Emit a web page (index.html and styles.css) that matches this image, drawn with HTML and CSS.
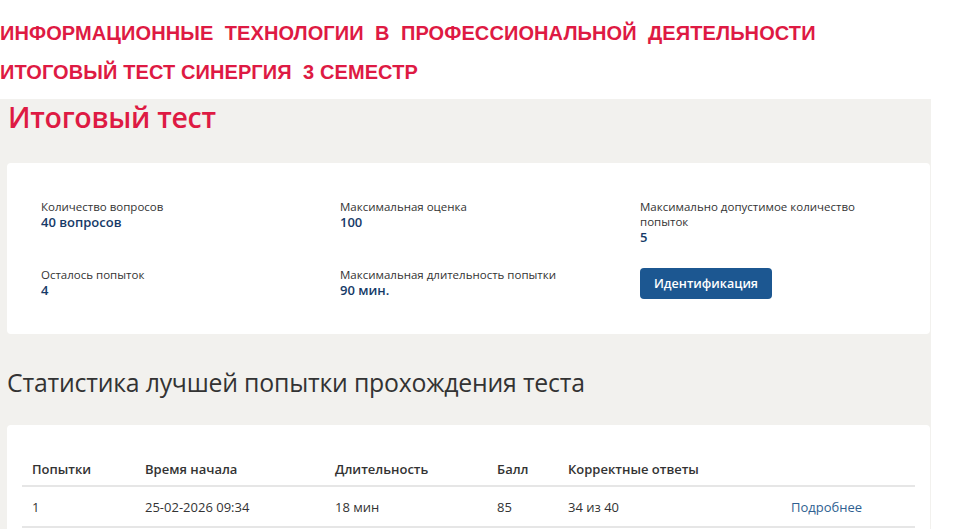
FILE: index.html
```html
<!DOCTYPE html>
<html lang="ru">
<head>
<meta charset="utf-8">
<link rel="stylesheet" href="styles.css">
</head>
<body>
<header class="banner">
  <div class="banner-line">ИНФОРМАЦИОННЫЕ&nbsp; ТЕХНОЛОГИИ&nbsp; В&nbsp; ПРОФЕССИОНАЛЬНОЙ&nbsp; ДЕЯТЕЛЬНОСТИ</div>
  <div class="banner-line">ИТОГОВЫЙ ТЕСТ СИНЕРГИЯ&nbsp; 3 СЕМЕСТР</div>
</header>
<main class="panel">
  <h1 class="title">Итоговый тест</h1>
  <section class="card info">
    <div class="info-grid">
      <div class="item"><div class="label">Количество вопросов</div><div class="value">40 вопросов</div></div>
      <div class="item"><div class="label">Максимальная оценка</div><div class="value">100</div></div>
      <div class="item"><div class="label">Максимально допустимое количество<br>попыток</div><div class="value">5</div></div>
      <div class="item"><div class="label">Осталось попыток</div><div class="value">4</div></div>
      <div class="item"><div class="label">Максимальная длительность попытки</div><div class="value">90 мин.</div></div>
      <div class="item"><button class="btn">Идентификация</button></div>
    </div>
  </section>
  <h2 class="subtitle">Статистика лучшей попытки прохождения теста</h2>
  <section class="card stats">
    <table class="tbl">
      <thead>
        <tr><th class="c1">Попытки</th><th class="c2">Время начала</th><th class="c3">Длительность</th><th class="c4">Балл</th><th class="c5">Корректные ответы</th><th class="c6"></th></tr>
      </thead>
      <tbody>
        <tr><td>1</td><td>25-02-2026 09:34</td><td>18 мин</td><td>85</td><td>34 из 40</td><td><a class="more" href="#">Подробнее</a></td></tr>
      </tbody>
    </table>
  </section>
</main>
</body>
</html>
```
FILE: styles.css
```css
html, body {
  margin: 0;
  padding: 0;
  background: #ffffff;
}
body {
  width: 965px;
  height: 529px;
  overflow: hidden;
  font-family: "Open Sans", "Noto Sans", sans-serif;
}
.banner {
  padding: 14px 0 0 0;
  height: 99px;
  box-sizing: border-box;
}
.banner-line {
  font-family: "Liberation Sans", Arial, sans-serif;
  font-weight: bold;
  font-size: 20px;
  color: #de1a43;
  line-height: 39px;
  letter-spacing: 0.1px;
  white-space: nowrap;
}
.panel {
  width: 931px;
  height: 430px;
  background: #f2f1ee;
  padding: 0 1px 0 7px;
  box-sizing: border-box;
}
.title {
  margin: 0;
  padding: 0 0 0 1px;
  font-family: "Open Sans", sans-serif;
  font-weight: 600;
  font-size: 28.5px;
  line-height: 36px;
  color: #de1a43;
  letter-spacing: -0.3px;
}
.card {
  background: #ffffff;
  border-radius: 4px;
}
.info {
  margin-top: 28px;
  height: 171px;
  box-sizing: border-box;
  padding: 36px 0 0 34px;
}
.info-grid {
  display: grid;
  grid-template-columns: 299px 300px 260px;
  grid-template-rows: 68px 40px;
}
.label {
  font-size: 11.5px;
  line-height: 15px;
  color: #333333;
}
.value {
  font-size: 13px;
  font-weight: 600;
  line-height: 17px;
  color: #163a68;
}
.btn {
  display: block;
  margin-top: 1px;
  width: 132px;
  height: 31px;
  border: none;
  border-radius: 4px;
  background: #1c5791;
  color: #ffffff;
  font-family: "Open Sans", sans-serif;
  font-weight: 600;
  font-size: 12.5px;
  padding: 0;
}
.subtitle {
  margin: 0;
  padding: 32px 0 0 0;
  font-family: "Open Sans", sans-serif;
  font-weight: 400;
  font-size: 24.8px;
  line-height: 32px;
  color: #333333;
  letter-spacing: -0.2px;
}
.stats {
  margin-top: 27px;
  height: 120px;
  padding: 28px 15px 0 15px;
  box-sizing: border-box;
}
.tbl {
  width: 893px;
  border-collapse: collapse;
  font-size: 13px;
  color: #333333;
}
.tbl th {
  text-align: left;
  font-weight: 600;
  height: 32px;
  padding: 0 0 0 10px;
  border-bottom: 2px solid #e6e6e6;
}
.tbl td {
  height: 39px;
  padding: 0 0 0 10px;
  border-bottom: 2px solid #e6e6e6;
}
.c1 { width: 103px; }
.c2 { width: 180px; }
.c3 { width: 152px; }
.c4 { width: 61px; }
.c5 { width: 213px; }
.more {
  color: #2f5f91;
  text-decoration: none;
}
```
